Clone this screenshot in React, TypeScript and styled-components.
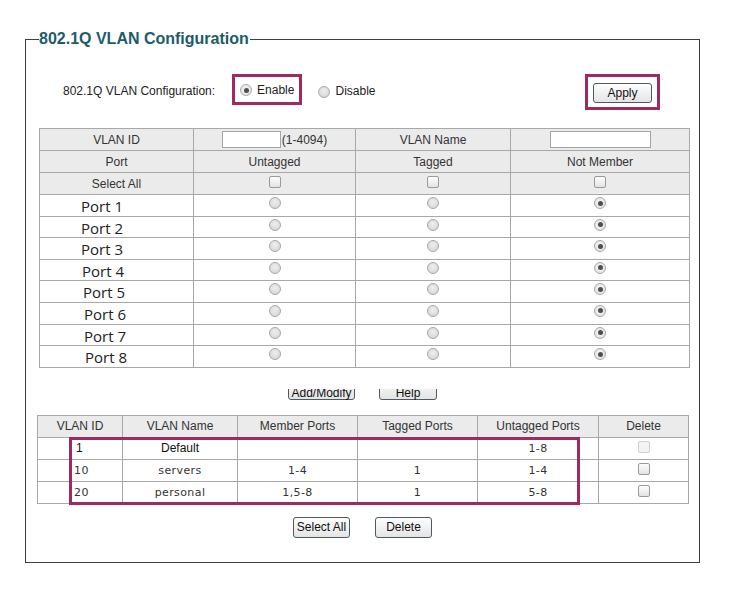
import React from 'react'
import styled, { createGlobalStyle } from 'styled-components'

const GlobalStyle = createGlobalStyle`
  html, body {
    margin: 0;
    padding: 0;
    background: #fff;
  }
  body {
    font-family: "Liberation Sans", Arial, sans-serif;
    font-size: 12px;
    color: #333;
  }
`

const MARK = '#9e2a5f'
const GRID = '#a8a8a8'

const Fieldset = styled.fieldset`
  margin: 30px 0 0 25px;
  padding: 0 0 24px 0;
  width: 675px;
  box-sizing: border-box;
  border: 1px solid #3a3f41;
  min-inline-size: 0;
`

const Legend = styled.legend`
  margin-left: 13px;
  padding: 0 1px 0 0;
  font-size: 16px;
  line-height: 18px;
  font-weight: bold;
  color: #1d5c68;
`

const ConfigRow = styled.div`
  display: flex;
  align-items: flex-start;
  margin-top: 26px;
  padding: 0 39px 0 37px;
  height: 36px;
`

const ConfigLabel = styled.span`
  line-height: 31px;
  padding-top: 2px;
  color: #222;
  margin-right: 17px;
`

const MarkBox = styled.div`
  display: flex;
  align-items: center;
  border: 3px solid ${MARK};
  box-sizing: border-box;
  height: 31px;
  padding: 1px 5px 0 5px;
`

const Choice = styled.label`
  display: flex;
  align-items: center;
  gap: 5px;
  color: #222;
  line-height: 25px;
`

const Plain = styled(Choice)`
  margin-left: 16px;
  line-height: 31px;
  padding-top: 2px;
`

const ApplyBox = styled.div`
  margin-left: auto;
  border: 3px solid ${MARK};
  box-sizing: border-box;
  width: 75px;
  height: 36px;
  padding: 6px 5px 0 5px;
`

const Button = styled.button<{ $w?: number; $h?: number }>`
  font-family: "Liberation Sans", Arial, sans-serif;
  font-size: 12px;
  color: #111;
  white-space: nowrap;
  height: ${p => (p.$h ? p.$h : 20)}px;
  width: ${p => (p.$w ? `${p.$w}px` : 'auto')};
  padding: 0 2px;
  border: 1px solid #4d5b60;
  border-radius: 3px;
  background: linear-gradient(#fefefe, #e4e4e4);
  box-sizing: border-box;
  cursor: pointer;
`

const Radio = styled.span<{ $on?: boolean }>`
  display: inline-block;
  position: relative;
  width: 12px;
  height: 12px;
  border-radius: 50%;
  box-sizing: border-box;
  border: 1px solid #a9a9a9;
  background: ${p =>
    p.$on
      ? 'radial-gradient(circle at 50% 45%, #f8f8f8, #dcdcdc)'
      : 'radial-gradient(circle at 50% 40%, #eeeeee, #d2d2d2)'};
  vertical-align: top;

  &::after {
    content: '';
    display: ${p => (p.$on ? 'block' : 'none')};
    position: absolute;
    left: 50%;
    top: 50%;
    width: 5px;
    height: 5px;
    margin: -2.5px 0 0 -2.5px;
    border-radius: 50%;
    background: #4f4f4f;
  }
`

const Check = styled.span<{ $off?: boolean }>`
  display: inline-block;
  width: 12px;
  height: 12px;
  box-sizing: border-box;
  border-radius: 2px;
  border: 1px solid ${p => (p.$off ? '#cfcfcf' : '#9a9a9a')};
  background: ${p => (p.$off ? '#f3f3f3' : 'linear-gradient(#fdfdfd, #e3e3e3)')};
  vertical-align: top;
`

const Grid = styled.table<{ $left: number; $width: number }>`
  border-collapse: collapse;
  table-layout: fixed;
  margin-left: ${p => p.$left}px;
  width: ${p => p.$width}px;
  font-size: 12px;

  td, th {
    border: 1px solid ${GRID};
    padding: 0;
    text-align: center;
    font-weight: normal;
    color: #333;
  }
`

const TopGrid = styled(Grid)`
  margin-top: 18px;
`

const HeadRow = styled.tr`
  height: 22px;
  background: #ebebeb;
`

const BoxCell = styled.td<{ $top: number }>`
  && {
    vertical-align: top;
    line-height: 12px;
    padding-top: ${p => p.$top}px;
  }
`

const PortRow = styled.tr`
  height: 21.6px;
  background: #fff;
`

const PortName = styled.td<{ $indent: number }>`
  && {
    text-align: left;
    vertical-align: top;
    padding: 2px 0 0 ${p => p.$indent}px;
    font-family: "Open Sans", "DejaVu Sans", sans-serif;
    font-size: 15px;
    line-height: 18px;
    color: #222;
  }
`

const TextBox = styled.input<{ $w: number }>`
  width: ${p => p.$w}px;
  height: 17px;
  box-sizing: border-box;
  border: 1px solid #9da6ab;
  padding: 0;
  margin: 0;
  vertical-align: middle;
  background: #fff;
`

const Range = styled.span`
  vertical-align: middle;
  margin-left: 1px;
`

const Strip = styled.div`
  display: flex;
  justify-content: center;
  align-items: flex-end;
  gap: 24px;
  margin-top: 21px;
  height: 11px;
  overflow: hidden;

  button {
    flex: none;
    height: 24px;
    padding-top: 9px;
    padding-bottom: 0;
  }
`

const ListWrap = styled.div`
  position: relative;
  margin-top: 15px;
`

const ListRow = styled.tr`
  height: 22px;
  background: #fff;
`

const Data = styled.td<{ $mono?: boolean; $pad?: number }>`
  && {
    font-family: ${p => (p.$mono ? '"DejaVu Sans", Verdana, sans-serif' : '"Liberation Sans", Arial, sans-serif')};
    font-size: ${p => (p.$mono ? 11 : 12)}px;
    letter-spacing: ${p => (p.$mono ? 0.4 : 0)}px;
    color: ${p => (p.$mono ? '#333' : '#111')};
    text-align: ${p => (p.$pad !== undefined ? 'left' : 'center')};
    padding-left: ${p => p.$pad || 0}px;
  }
`

const Highlight = styled.div`
  position: absolute;
  left: 43px;
  top: 22px;
  width: 511px;
  height: 68px;
  border: 3px solid ${MARK};
  box-sizing: border-box;
  pointer-events: none;
`

const Actions = styled.div`
  display: flex;
  justify-content: center;
  gap: 25px;
  margin-top: 13px;
`

const ports = [
  { name: 'Port 1', indent: 41 },
  { name: 'Port 2', indent: 41 },
  { name: 'Port 3', indent: 41 },
  { name: 'Port 4', indent: 42 },
  { name: 'Port 5', indent: 43 },
  { name: 'Port 6', indent: 44 },
  { name: 'Port 7', indent: 44 },
  { name: 'Port 8', indent: 45 },
]

const vlans = [
  { id: '1', name: 'Default', member: '', tagged: '', untagged: '1-8', plain: true },
  { id: '10', name: 'servers', member: '1-4', tagged: '1', untagged: '1-4', plain: false },
  { id: '20', name: 'personal', member: '1,5-8', tagged: '1', untagged: '5-8', plain: false },
]

export default function App() {
  return (
    <>
      <GlobalStyle />
      <Fieldset>
        <Legend>802.1Q VLAN Configuration</Legend>

        <ConfigRow>
          <ConfigLabel>802.1Q VLAN Configuration:</ConfigLabel>
          <MarkBox>
            <Choice>
              <Radio $on />
              Enable
            </Choice>
          </MarkBox>
          <Plain>
            <Radio />
            Disable
          </Plain>
          <ApplyBox>
            <Button $w={59}>Apply</Button>
          </ApplyBox>
        </ConfigRow>

        <TopGrid $left={13} $width={650}>
          <colgroup>
            <col style={{ width: 154 }} />
            <col style={{ width: 162 }} />
            <col style={{ width: 155 }} />
            <col style={{ width: 179 }} />
          </colgroup>
          <tbody>
            <HeadRow>
              <td>VLAN ID</td>
              <td>
                <TextBox $w={59} />
                <Range>(1-4094)</Range>
              </td>
              <td>VLAN Name</td>
              <td>
                <TextBox $w={101} />
              </td>
            </HeadRow>
            <HeadRow>
              <td>Port</td>
              <td>Untagged</td>
              <td>Tagged</td>
              <td>Not Member</td>
            </HeadRow>
            <HeadRow>
              <td>Select All</td>
              <BoxCell $top={3}><Check /></BoxCell>
              <BoxCell $top={3}><Check /></BoxCell>
              <BoxCell $top={3}><Check /></BoxCell>
            </HeadRow>
            {ports.map(p => (
              <PortRow key={p.name}>
                <PortName $indent={p.indent}>{p.name}</PortName>
                <BoxCell $top={2}><Radio /></BoxCell>
                <BoxCell $top={2}><Radio /></BoxCell>
                <BoxCell $top={2}><Radio $on /></BoxCell>
              </PortRow>
            ))}
          </tbody>
        </TopGrid>

        <Strip>
          <Button $w={67}>Add/Modify</Button>
          <Button $w={58}>Help</Button>
        </Strip>

        <ListWrap>
          <Grid $left={11} $width={651}>
            <colgroup>
              <col style={{ width: 85 }} />
              <col style={{ width: 115 }} />
              <col style={{ width: 120 }} />
              <col style={{ width: 120 }} />
              <col style={{ width: 121 }} />
              <col style={{ width: 90 }} />
            </colgroup>
            <tbody>
              <HeadRow>
                <th>VLAN ID</th>
                <th>VLAN Name</th>
                <th>Member Ports</th>
                <th>Tagged Ports</th>
                <th>Untagged Ports</th>
                <th>Delete</th>
              </HeadRow>
              {vlans.map(v => (
                <ListRow key={v.id}>
                  <Data $mono={!v.plain} $pad={v.plain ? 38 : 36}>{v.id}</Data>
                  <Data $mono={!v.plain}>{v.name}</Data>
                  <Data $mono>{v.member}</Data>
                  <Data $mono>{v.tagged}</Data>
                  <Data $mono>{v.untagged}</Data>
                  <BoxCell $top={3}><Check $off={v.plain} /></BoxCell>
                </ListRow>
              ))}
            </tbody>
          </Grid>
          <Highlight />
        </ListWrap>

        <Actions>
          <Button $w={57} $h={21}>Select All</Button>
          <Button $w={57} $h={21}>Delete</Button>
        </Actions>
      </Fieldset>
    </>
  )
}
